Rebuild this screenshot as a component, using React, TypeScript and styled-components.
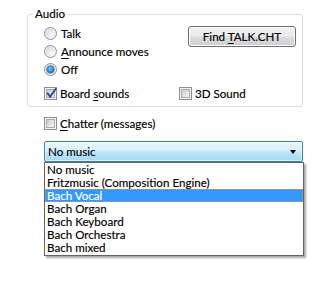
import React from 'react';
import styled, { createGlobalStyle, css } from 'styled-components';

const Global = createGlobalStyle`
  html, body { margin: 0; padding: 0; background: #ffffff; }
  body {
    font-family: Lato, "Noto Sans", "Liberation Sans", sans-serif;
    font-size: 11.6px;
    color: #000000;
    -webkit-text-stroke: 0.15px currentColor;
  }
  * { box-sizing: border-box; }
`;

const Page = styled.div`
  width: 330px;
  height: 287px;
  padding-top: 7px;
`;

const Group = styled.fieldset`
  margin: 0 0 0 27px;
  padding: 0;
  width: 276px;
  height: 100px;
  border: 1px solid #d5dfe5;
  border-radius: 3px;
`;

const Legend = styled.legend`
  margin-left: 5px;
  padding: 0 2px;
  line-height: 14px;
`;

const GroupBody = styled.div`
  padding: 3px 6px 0 16px;
`;

const TopRow = styled.div`
  display: flex;
  align-items: flex-start;
  justify-content: space-between;
`;

const Options = styled.div`
  display: flex;
  flex-direction: column;
`;

const OptionRow = styled.label`
  display: flex;
  align-items: center;
  gap: 4px;
  height: 18px;
  line-height: 15px;
`;

const BottomRow = styled.div`
  display: grid;
  grid-template-columns: 135px auto;
  margin-top: 8px;
`;

const CheckRow = styled.label`
  display: flex;
  align-items: center;
  gap: 3px;
  height: 14px;
  line-height: 15px;
`;

const Radio = styled.span<{ $checked?: boolean }>`
  position: relative;
  flex: none;
  width: 13px;
  height: 13px;
  border-radius: 50%;
  border: 1px solid #8d9297;
  background: radial-gradient(circle at 65% 70%, #fbfbfb 0%, #eaeaea 35%, #c9cbcd 100%);
  box-shadow: inset 0 0 0 1px #f2f2f2;
  ${(p) =>
    p.$checked &&
    css`
      &::after {
        content: '';
        position: absolute;
        left: 2px;
        top: 2px;
        width: 7px;
        height: 7px;
        border-radius: 50%;
        background: radial-gradient(circle at 45% 40%, #8fd3ff 0%, #2d8ee0 45%, #0c4a8e 100%);
        box-shadow: 0 0 0 0.5px #1a3d66;
      }
    `}
`;

const Box = styled.span`
  position: relative;
  flex: none;
  width: 13px;
  height: 13px;
  border: 1px solid #8e8f8f;
  background: #f4f4f4;
  &::before {
    content: '';
    position: absolute;
    inset: 1px;
    border: 1px solid #a8acb1;
    background: linear-gradient(135deg, #c9ccd1 0%, #e4e5e7 60%, #f4f4f5 100%);
  }
  svg {
    position: absolute;
    left: 0;
    top: -1px;
  }
`;

const Mnemonic = styled.span`
  text-decoration: underline;
  text-underline-offset: 2px;
  text-decoration-thickness: 1px;
`;

const Button = styled.button`
  margin-top: 2px;
  width: 108px;
  height: 21px;
  padding: 0;
  border: 1px solid #707070;
  border-radius: 3px;
  background: linear-gradient(#f2f2f2 0%, #ebebeb 48%, #dddddd 52%, #cfcfcf 100%);
  box-shadow: inset 0 0 0 1px #fbfbfb;
  font: inherit;
  color: #000;
  line-height: 17px;
`;

const Below = styled.div`
  margin: 9px 0 0 44px;
  width: 260px;
`;

const ComboWrap = styled.div`
  position: relative;
  margin-top: 11px;
`;

const Combo = styled.div`
  display: flex;
  align-items: center;
  justify-content: space-between;
  width: 259px;
  height: 21px;
  padding: 0 6px 0 3px;
  border: 1px solid #3c7fb1;
  border-radius: 2px;
  background: linear-gradient(#eaf6fd 0%, #d9f0fc 45%, #bee6fd 55%, #a7d9f5 100%);
  box-shadow: inset 0 0 0 1px rgba(255, 255, 255, 0.55);
  line-height: 15px;
`;

const Arrow = styled.span`
  width: 0;
  height: 0;
  border-left: 3.5px solid transparent;
  border-right: 3.5px solid transparent;
  border-top: 4px solid #000;
  margin-top: 1px;
`;

const List = styled.ul`
  position: absolute;
  left: 0;
  top: 21px;
  margin: 0;
  padding: 0;
  list-style: none;
  width: 260px;
  height: 94px;
  border: 1px solid #646464;
  background: #ffffff;
  box-shadow: 2px 2px 2px rgba(0, 0, 0, 0.35);
`;

const Item = styled.li<{ $selected?: boolean }>`
  height: 13px;
  line-height: 13px;
  padding-left: 2px;
  white-space: nowrap;
  ${(p) =>
    p.$selected &&
    css`
      background: #3399ff;
      color: #ffffff;
      outline: 1px dotted #e0954a;
      outline-offset: -1px;
    `}
`;

const Check = () => (
  <svg width="13" height="13" viewBox="0 0 13 13">
    <path d="M2.8 6.6 L5.2 9.6 L10.6 2" fill="none" stroke="#2c4d96" strokeWidth="1.9" strokeLinecap="square" />
  </svg>
);

const items = [
  'No music',
  'Fritzmusic (Composition Engine)',
  'Bach Vocal',
  'Bach Organ',
  'Bach Keyboard',
  'Bach Orchestra',
  'Bach mixed',
];

export default function App() {
  return (
    <Page>
      <Global />
      <Group>
        <Legend>Audio</Legend>
        <GroupBody>
          <TopRow>
            <Options>
              <OptionRow>
                <Radio />
                Talk
              </OptionRow>
              <OptionRow>
                <Radio />
                <span>
                  <Mnemonic>A</Mnemonic>nnounce moves
                </span>
              </OptionRow>
              <OptionRow>
                <Radio $checked />
                Off
              </OptionRow>
            </Options>
            <Button>
              Find <Mnemonic>T</Mnemonic>ALK.CHT
            </Button>
          </TopRow>
          <BottomRow>
            <CheckRow>
              <Box>
                <Check />
              </Box>
              <span>
                Board <Mnemonic>s</Mnemonic>ounds
              </span>
            </CheckRow>
            <CheckRow>
              <Box />
              3D Sound
            </CheckRow>
          </BottomRow>
        </GroupBody>
      </Group>
      <Below>
        <CheckRow>
          <Box />
          <span>
            <Mnemonic>C</Mnemonic>hatter (messages)
          </span>
        </CheckRow>
        <ComboWrap>
          <Combo>
            <span>No music</span>
            <Arrow />
          </Combo>
          <List>
            {items.map((t) => (
              <Item key={t} $selected={t === 'Bach Vocal'}>
                {t}
              </Item>
            ))}
          </List>
        </ComboWrap>
      </Below>
    </Page>
  );
}
